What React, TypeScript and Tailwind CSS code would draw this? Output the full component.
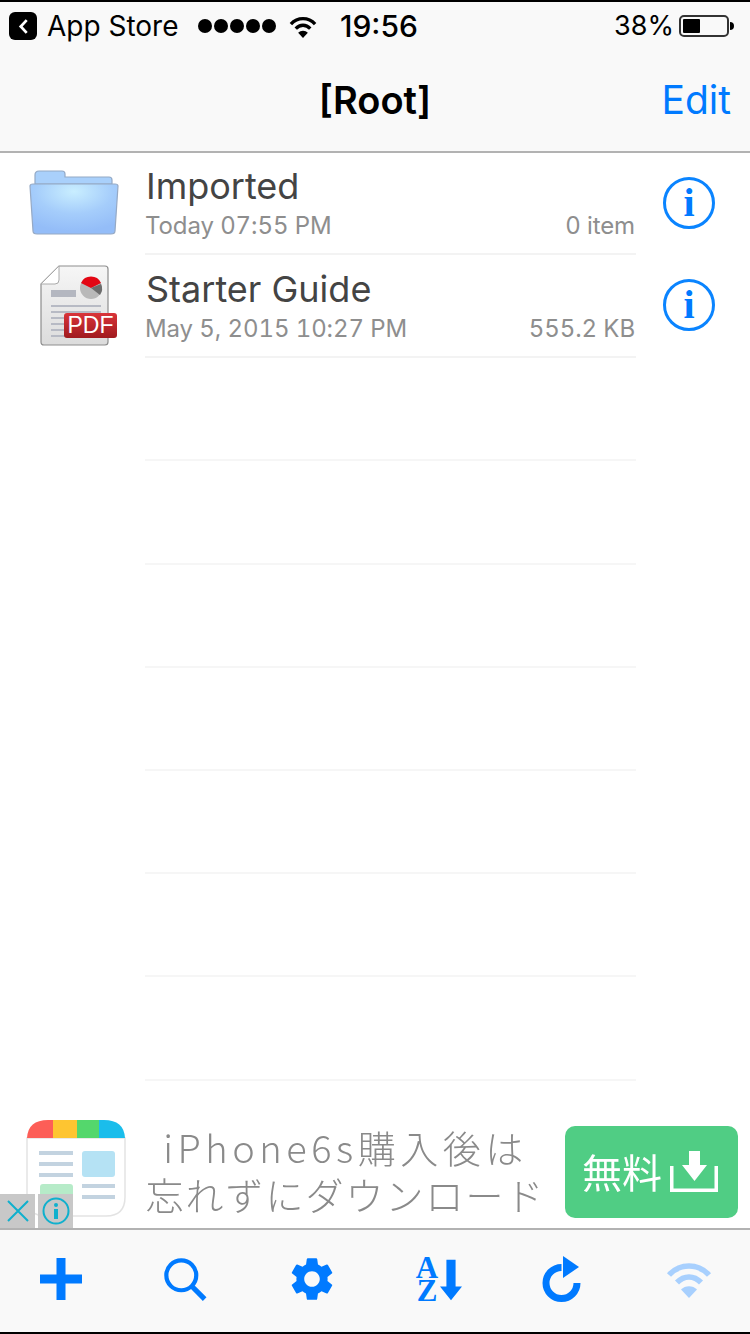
import React from 'react';
import { MdSettings } from 'react-icons/md';

const BLUE = '#007aff';

const files = [
  { name: 'Imported', date: 'Today 07:55 PM', size: '0 item', kind: 'folder' },
  { name: 'Starter Guide', date: 'May 5, 2015 10:27 PM', size: '555.2 KB', kind: 'pdf' },
];

const WifiIcon = ({ className, color }: { className: string; color: string }) => (
  <svg viewBox="0 0 46 38" className={className} fill="none">
    <path d="M3 15 C 14 3, 32 3, 43 15" stroke={color} strokeWidth="5.5" />
    <path d="M11 22.5 C 18 15, 28 15, 35 22.5" stroke={color} strokeWidth="5.5" />
    <path d="M23 38 L15 29.5 C 19 25, 27 25, 31 29.5 Z" fill={color} />
  </svg>
);

const FolderIcon = () => (
  <svg viewBox="0 0 90 66" className="w-[90px] h-[66px] ml-[2px] mb-[2px]">
    <defs>
      <radialGradient id="folderFill" cx="50%" cy="15%" r="80%">
        <stop offset="0%" stopColor="#c9eeff" />
        <stop offset="55%" stopColor="#a5cdfb" />
        <stop offset="100%" stopColor="#94bdf8" />
      </radialGradient>
    </defs>
    <path d="M6 14 V5 Q6 1 10 1 H33 Q36 1 36 4 V7 H80 Q83 7 83 10 V14 Z" fill="#a9d0fb" stroke="#93a9c6" strokeWidth="1.2" />
    <path d="M1 16 Q1 14 4 14 H86 Q89 14 89 16 L86 61 Q86 64 82 64 H8 Q4 64 4 61 Z" fill="url(#folderFill)" stroke="#96a9c4" strokeWidth="1.2" />
  </svg>
);

const PdfIcon = () => (
  <svg viewBox="0 0 80 84" className="w-[80px] h-[84px] ml-[14px]">
    <defs>
      <linearGradient id="pdfBadge" x1="0" y1="0" x2="0" y2="1">
        <stop offset="0%" stopColor="#d9343a" />
        <stop offset="100%" stopColor="#a01a1e" />
      </linearGradient>
      <linearGradient id="pdfPage" x1="0" y1="0" x2="0" y2="1">
        <stop offset="0%" stopColor="#f6f6f6" />
        <stop offset="100%" stopColor="#dcdcdc" />
      </linearGradient>
    </defs>
    <path d="M19 1 H65 Q68 1 68 4 V77 Q68 80 65 80 H4 Q1 80 1 77 V19 Z" fill="url(#pdfPage)" stroke="#8d8d8d" strokeWidth="1.2" />
    <path d="M19 1 V15 Q19 19 15 19 H1 Z" fill="#fff" stroke="#aaa" strokeWidth="1" />
    <rect x="11" y="25" width="25" height="7" fill="#b4b7c0" />
    <circle cx="51" cy="23" r="11" fill="#b9b9b9" />
    <path d="M41 18 A11 11 0 0 1 61 18 L51 23 Z" fill="#e30613" />
    <path d="M51 23 L61 19 A11 11 0 0 1 60 30 Z" fill="#6d6d6d" />
    <g fill="#b7bac4">
      <rect x="11" y="40" width="50" height="2" />
      <rect x="11" y="46" width="50" height="2" />
      <rect x="11" y="52" width="26" height="2" />
      <rect x="11" y="58" width="26" height="2" />
      <rect x="11" y="64" width="26" height="2" />
      <rect x="11" y="70" width="26" height="2" />
    </g>
    <rect x="24" y="48" width="53" height="25" rx="3" fill="url(#pdfBadge)" />
    <text x="50.5" y="68" textAnchor="middle" fill="#fff" fontSize="23" fontFamily="'Liberation Sans', sans-serif">PDF</text>
  </svg>
);

const App: React.FC = () => {
  return (
    <div className="w-[750px] h-[1334px] flex flex-col bg-white overflow-hidden font-['Inter','Liberation_Sans',sans-serif]">
      {/* Status + nav */}
      <div className="h-[153px] shrink-0 flex flex-col bg-[#f9f9f9] border-t-2 border-black border-b-2 border-b-[#b2b2b2]">
        <div className="h-[48px] flex items-center pl-[9px] pr-[16px] text-[28px] text-black">
          <div className="w-[28px] h-[28px] rounded-[6px] bg-black flex items-center justify-center">
            <svg viewBox="0 0 12 18" className="w-[11px] h-[17px]" fill="none">
              <path d="M9.5 2 L3 9 L9.5 16" stroke="#fff" strokeWidth="3" />
            </svg>
          </div>
          <span className="ml-[10px] w-[151px]">App Store</span>
          <div className="flex gap-[2px]">
            {[0, 1, 2, 3, 4].map((i) => (
              <div key={i} className="w-[14px] h-[14px] rounded-full bg-black" />
            ))}
          </div>
          <WifiIcon className="ml-[13px] w-[28px] h-[23px]" color="#000" />
          <span className="ml-[23px] font-medium text-[30px]">19:56</span>
          <span className="ml-auto text-[27px]">38%</span>
          <div className="ml-[5px] w-[50px] h-[22px] border-2 border-[#333] rounded-[5px] p-[2px]">
            <div className="w-[17px] h-full bg-black rounded-[1px]" />
          </div>
          <div className="w-[4px] h-[8px] bg-black rounded-r-full ml-[1px]" />
        </div>
        <div className="flex-1 grid grid-cols-[1fr_auto_1fr] items-center">
          <div />
          <div className="text-[38px] font-semibold text-black">[Root]</div>
          <div className="text-right pr-[19px] text-[39px] text-[#007aff]">Edit</div>
        </div>
      </div>

      {/* List */}
      <div className="h-[957px] shrink-0 overflow-hidden">
        {files.map((f, i) => (
          <div key={f.name} className={`flex ${i === 0 ? 'h-[102px]' : 'h-[103.2px]'}`}>
            <div className="w-[145px] flex items-center justify-center">
              {f.kind === 'folder' ? <FolderIcon /> : <PdfIcon />}
            </div>
            <div className="w-[491px] border-b-2 border-[#f3f3f3] flex flex-col justify-end pb-[12px] pr-[1px]">
              <div className="text-[36px] leading-[44px] text-[#444444] ml-[1px]">{f.name}</div>
              <div className="mt-[3px] flex justify-between text-[24px] leading-[30px] tracking-[-0.1px] tabular-nums text-[#8e8e8e]">
                <span>{f.date}</span>
                <span>{f.size}</span>
              </div>
            </div>
            <div className="flex-1 flex items-center justify-center pr-[8px] pb-[3px]">
              <div className="w-[52px] h-[52px] rounded-full border-[3px] border-[#0a84ff] flex items-center justify-center text-[40px] font-bold leading-none text-[#007aff] font-['Liberation_Serif',serif]">
                i
              </div>
            </div>
          </div>
        ))}
        {[0, 1, 2, 3, 4, 5, 6].map((i) => (
          <div key={i} className="h-[103.2px] pl-[145px]">
            <div className="w-[491px] h-full border-b-2 border-[#f6f6f6]" />
          </div>
        ))}
      </div>

      {/* Ad */}
      <div className="relative h-[118px] shrink-0 flex items-center pl-[26px] pr-[12px] pt-[10px]">
        <svg viewBox="0 0 100 98" className="w-[100px] h-[98px] shrink-0 mb-[12px]">
          <path d="M1 19 V78 Q1 97 20 97 H80 Q99 97 99 78 V19 Z" fill="#fff" stroke="#e3e3e3" strokeWidth="1.5" />
          <path d="M1 19 Q2 1 22 1 H27 V19 Z" fill="#fd5e57" />
          <rect x="27" y="1" width="24" height="18" fill="#fec531" />
          <rect x="51" y="1" width="22" height="18" fill="#54d76c" />
          <path d="M73 1 H78 Q98 1 99 19 H73 Z" fill="#1abdeb" />
          <g fill="#c3d3e0">
            <rect x="13" y="32" width="34" height="4" />
            <rect x="13" y="43" width="34" height="4" />
            <rect x="13" y="54" width="34" height="4" />
            <rect x="56" y="65" width="33" height="4" />
            <rect x="56" y="76" width="33" height="4" />
          </g>
          <rect x="56" y="32" width="33" height="26" rx="3" fill="#b5e2f4" />
          <rect x="14" y="65" width="33" height="24" rx="3" fill="#b6ebc8" />
        </svg>
        <div className="w-[439px] text-center text-[38px] leading-[47px] text-[#8a8a8a] font-light whitespace-nowrap pb-[8px] font-['Noto_Sans_CJK_JP',sans-serif] blur-[0.5px]">
          <div className="tracking-[4.5px]">iPhone6s購入後は</div>
          <div className="tracking-[2px]">忘れずにダウンロード</div>
        </div>
        <div className="w-[173px] h-[92px] mb-[4px] rounded-[10px] bg-[#50cd84] flex items-center justify-center gap-[8px] pr-[3px] text-white">
          <span className="text-[40px] pb-[3px] font-['Noto_Sans_CJK_JP',sans-serif] blur-[0.4px]">無料</span>
          <svg viewBox="0 0 48 41" className="w-[48px] h-[41px] mb-[2px]" fill="none">
            <path d="M1.75 15 V39.25 H46.25 V15" stroke="#fff" strokeWidth="3.5" />
            <path d="M19 0 H30 V14 H37 L24.5 30 L12 14 H19 Z" fill="#fff" />
          </svg>
        </div>

        {/* Ad close / info badges */}
        <div className="absolute left-0 bottom-0 flex gap-[3px]">
          <div className="w-[35px] h-[34px] bg-[#c8c8c8] flex items-center justify-center">
            <svg viewBox="0 0 24 24" className="w-[24px] h-[24px]" fill="none">
              <path d="M2 2 L22 22 M22 2 L2 22" stroke="#10b0cd" strokeWidth="2" />
            </svg>
          </div>
          <div className="w-[35px] h-[34px] bg-[#c8c8c8] flex items-center justify-center">
            <svg viewBox="0 0 28 28" className="w-[28px] h-[28px]" fill="none">
              <circle cx="14" cy="14" r="12.5" stroke="#10b0cd" strokeWidth="2" />
              <circle cx="14" cy="8" r="2" fill="#10b0cd" />
              <rect x="12" y="12" width="4" height="10" fill="#10b0cd" />
            </svg>
          </div>
        </div>
      </div>

      {/* Toolbar */}
      <div className="flex-1 grid grid-cols-6 items-center bg-[#f9f9f9] border-t-2 border-[#b2b2b2] border-b-2 border-b-black pb-[4px]">
        <div className="flex justify-center pr-[4px]">
          <svg viewBox="0 0 42 42" className="w-[42px] h-[42px]">
            <path d="M16.5 0 H25.5 V16.5 H42 V25.5 H25.5 V42 H16.5 V25.5 H0 V16.5 H16.5 Z" fill={BLUE} />
          </svg>
        </div>
        <div className="flex justify-center pr-[4px]">
          <svg viewBox="0 0 46 46" className="w-[43px] h-[43px]" fill="none">
            <circle cx="18.5" cy="18.5" r="16" stroke={BLUE} strokeWidth="4.5" />
            <path d="M29.5 30 L43.5 44" stroke={BLUE} strokeWidth="5.5" />
          </svg>
        </div>
        <div className="flex justify-center pr-[2px]">
          <MdSettings className="w-[52px] h-[52px] text-[#007aff]" />
        </div>
        <div className="flex justify-center pl-[3px]">
          <div className="flex items-end gap-[2px]">
            <div className="flex flex-col items-center text-[31px] leading-[23px] font-bold text-[#007aff] font-['Liberation_Serif',serif]">
              <span>A</span>
              <span>Z</span>
            </div>
            <svg viewBox="0 0 24 44" className="w-[22px] h-[44px]">
              <path d="M7 0 H17 V29 H24 L12 44 L0 29 H7 Z" fill={BLUE} />
            </svg>
          </div>
        </div>
        <div className="flex justify-center pr-[2px]">
          <svg viewBox="0 0 40 46" className="w-[40px] h-[46px]" fill="none">
            <path d="M35 27 A15.5 15.5 0 1 1 19.5 11.5" stroke={BLUE} strokeWidth="7" />
            <path d="M21 0 L37 11 L21 22 Z" fill={BLUE} />
          </svg>
        </div>
        <div className="flex justify-center pl-[2px]">
          <WifiIcon className="w-[46px] h-[38px]" color="#a8d0fe" />
        </div>
      </div>
    </div>
  );
};

export default App;
